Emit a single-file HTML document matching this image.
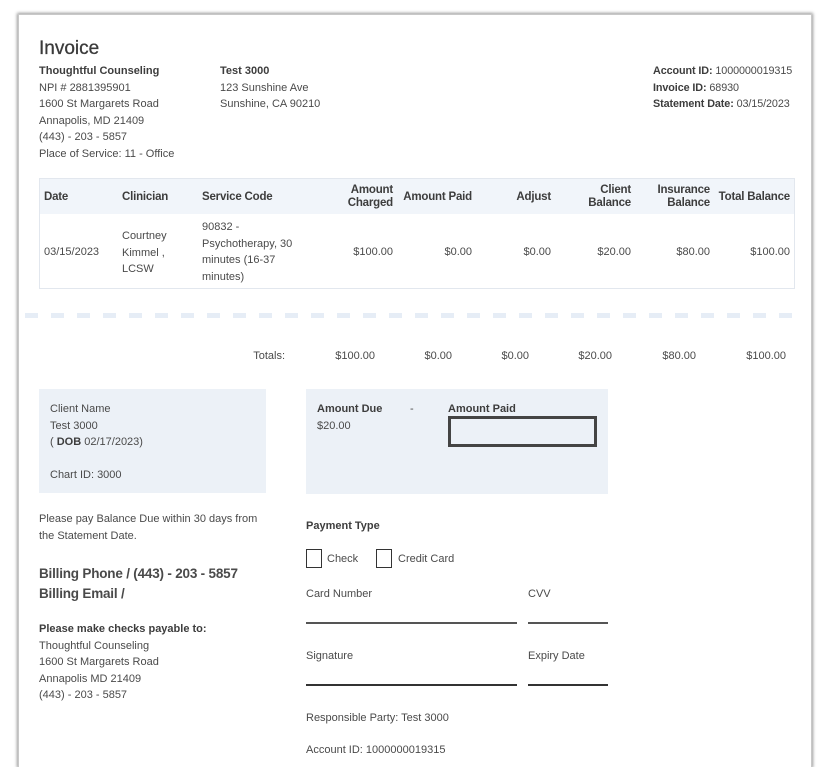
<!DOCTYPE html>
<html><head><meta charset="utf-8"><style>
*{margin:0;padding:0;box-sizing:border-box}
html,body{width:826px;height:767px;overflow:hidden}
body{background:#fff;position:relative;font-family:"Liberation Sans",sans-serif;color:#4a4a4a;font-size:11px}
.card{position:absolute;left:18px;top:14px;width:794px;height:753px;background:#fff;border:1px solid #c8c8c8;border-bottom:none;box-shadow:0 0 3px 1px #9a9a9a}
.a{position:absolute;white-space:nowrap;line-height:16.5px}
b{font-weight:bold;color:#3d3d3d}
.r{text-align:right}
.th{position:absolute;font-size:11.5px;line-height:13px;color:#3d3d3d;font-weight:bold;text-align:right;letter-spacing:-0.2px}
.td{position:absolute;font-size:11px;line-height:16.5px;color:#4a4a4a}
.line{position:absolute;height:2px;background:#333}
</style></head><body>
<div class="card"></div>
<div class="a" style="left:39px;top:38px;font-size:19px;line-height:22px;color:#3a3a3a;-webkit-text-stroke:0.3px #3a3a3a">Invoice</div>
<div class="a" style="left:39px;top:63px"><b>Thoughtful Counseling</b><br>NPI # 2881395901<br>1600 St Margarets Road<br>Annapolis, MD 21409<br>(443) - 203 - 5857<br>Place of Service: 11 - Office</div>
<div class="a" style="left:220px;top:63px"><b>Test 3000</b><br>123 Sunshine Ave<br>Sunshine, CA 90210</div>
<div class="a" style="left:653px;top:63px;font-size:10.8px;letter-spacing:-0.1px"><b>Account ID:</b> 1000000019315<br><b>Invoice ID:</b> 68930<br><b>Statement Date:</b> 03/15/2023</div>

<div style="position:absolute;left:39px;top:178px;width:756px;height:111px;border:1px solid #e2e7ee"></div>
<div style="position:absolute;left:40px;top:179px;width:754px;height:35px;background:#f1f5fa"></div>
<div class="th" style="left:44px;top:191px;text-align:left">Date</div>
<div class="th" style="left:122px;top:191px;text-align:left">Clinician</div>
<div class="th" style="left:202px;top:191px;text-align:left">Service Code</div>
<div class="th" style="right:433px;top:184px">Amount<br>Charged</div>
<div class="th" style="right:354px;top:191px">Amount Paid</div>
<div class="th" style="right:275px;top:191px">Adjust</div>
<div class="th" style="right:195px;top:184px">Client<br>Balance</div>
<div class="th" style="right:116px;top:184px">Insurance<br>Balance</div>
<div class="th" style="right:36px;top:191px">Total Balance</div>
<div class="td" style="left:44px;top:244px">03/15/2023</div>
<div class="td" style="left:122px;top:228px">Courtney<br>Kimmel ,<br>LCSW</div>
<div class="td" style="left:202px;top:219px">90832 -<br>Psychotherapy, 30<br>minutes (16-37<br>minutes)</div>
<div class="td r" style="right:433px;top:244px">$100.00</div>
<div class="td r" style="right:354px;top:244px">$0.00</div>
<div class="td r" style="right:275px;top:244px">$0.00</div>
<div class="td r" style="right:195px;top:244px">$20.00</div>
<div class="td r" style="right:116px;top:244px">$80.00</div>
<div class="td r" style="right:36px;top:244px">$100.00</div>

<div style="position:absolute;left:25px;top:313px;width:770px;height:5px;background:repeating-linear-gradient(90deg,#e6edf6 0 13px,transparent 13px 26px)"></div>

<div class="td r" style="right:541px;top:348px">Totals:</div>
<div class="td r" style="right:451px;top:348px">$100.00</div>
<div class="td r" style="right:374px;top:348px">$0.00</div>
<div class="td r" style="right:297px;top:348px">$0.00</div>
<div class="td r" style="right:214px;top:348px">$20.00</div>
<div class="td r" style="right:130px;top:348px">$80.00</div>
<div class="td r" style="right:40px;top:348px">$100.00</div>

<div style="position:absolute;left:39px;top:389px;width:227px;height:104px;background:#ecf1f7"></div>
<div class="a" style="left:50px;top:401px">Client Name<br>Test 3000<br>( <b>DOB</b> 02/17/2023)<br><br>Chart ID: 3000</div>
<div style="position:absolute;left:306px;top:389px;width:302px;height:105px;background:#ecf1f7"></div>
<div class="a" style="left:317px;top:401px"><b>Amount Due</b><br>$20.00</div>
<div class="a" style="left:410px;top:401px">-</div>
<div class="a" style="left:448px;top:401px"><b>Amount Paid</b></div>
<div style="position:absolute;left:448px;top:416px;width:149px;height:31px;border:3px solid #444;background:#ecf1f7"></div>

<div class="a" style="left:39px;top:511px">Please pay Balance Due within 30 days from<br>the Statement Date.</div>
<div class="a" style="left:39px;top:564px;font-size:13.5px;line-height:20px;font-weight:bold;color:#4a4a4a;letter-spacing:-0.2px">Billing Phone / (443) - 203 - 5857<br>Billing Email /</div>
<div class="a" style="left:39px;top:621px"><b>Please make checks payable to:</b><br>Thoughtful Counseling<br>1600 St Margarets Road<br>Annapolis MD 21409<br>(443) - 203 - 5857</div>

<div class="a" style="left:306px;top:518px"><b>Payment Type</b></div>
<div style="position:absolute;left:306px;top:549px;width:16px;height:19px;border:1px solid #333"></div>
<div class="a" style="left:327px;top:551px">Check</div>
<div style="position:absolute;left:376px;top:549px;width:16px;height:19px;border:1px solid #333"></div>
<div class="a" style="left:398px;top:551px">Credit Card</div>
<div class="a" style="left:306px;top:586px">Card Number</div>
<div class="a" style="left:528px;top:586px">CVV</div>
<div class="line" style="left:306px;top:622px;width:211px;background:#555"></div>
<div class="line" style="left:528px;top:622px;width:80px;background:#555"></div>
<div class="a" style="left:306px;top:648px">Signature</div>
<div class="a" style="left:528px;top:648px">Expiry Date</div>
<div class="line" style="left:306px;top:684px;width:211px"></div>
<div class="line" style="left:528px;top:684px;width:80px"></div>
<div class="a" style="left:306px;top:710px">Responsible Party: Test 3000</div>
<div class="a" style="left:306px;top:742px">Account ID: 1000000019315</div>
</body></html>
